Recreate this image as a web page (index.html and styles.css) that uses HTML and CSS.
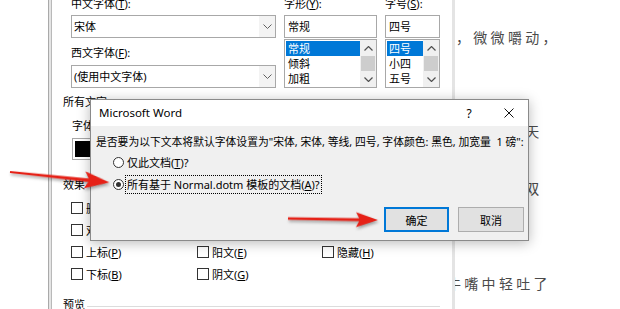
FILE: index.html
```html
<!DOCTYPE html>
<html lang="zh-CN">
<head>
<meta charset="utf-8">
<title>Microsoft Word</title>
<link rel="stylesheet" href="styles.css">
</head>
<body>
<div class="screen">
  <div class="gutter"></div>
  <div class="fd">
    <div class="fd-inner">
      <div class="fd-top">
        <div class="fcol c1">
          <div class="lbl">中文字体(<u>T</u>):</div>
          <div class="combo"><span class="combo-text">宋体</span><span class="combo-btn"><svg width="9" height="5" viewBox="0 0 9 5"><polyline points="0.5,0.5 4.5,4.5 8.5,0.5" fill="none" stroke="#606060" stroke-width="1"/></svg></span></div>
          <div class="lbl lbl-gap">西文字体(<u>F</u>):</div>
          <div class="combo"><span class="combo-text">(使用中文字体)</span><span class="combo-btn"><svg width="9" height="5" viewBox="0 0 9 5"><polyline points="0.5,0.5 4.5,4.5 8.5,0.5" fill="none" stroke="#606060" stroke-width="1"/></svg></span></div>
        </div>
        <div class="fcol c2">
          <div class="lbl">字形(<u>Y</u>):</div>
          <div class="field">常规</div>
          <div class="list">
            <div class="items">
              <div class="item sel">常规</div>
              <div class="item">倾斜</div>
              <div class="item">加粗</div>
            </div>
            <div class="sb">
              <span class="sb-arrow"><svg width="9" height="5" viewBox="0 0 9 5"><polyline points="0.5,4.5 4.5,0.5 8.5,4.5" fill="none" stroke="#505050" stroke-width="1.2"/></svg></span>
              <span class="sb-thumb"></span>
              <span class="sb-arrow"><svg width="9" height="5" viewBox="0 0 9 5"><polyline points="0.5,0.5 4.5,4.5 8.5,0.5" fill="none" stroke="#505050" stroke-width="1.2"/></svg></span>
            </div>
          </div>
        </div>
        <div class="fcol c3">
          <div class="lbl">字号(<u>S</u>):</div>
          <div class="field">四号</div>
          <div class="list">
            <div class="items">
              <div class="item sel">四号</div>
              <div class="item">小四</div>
              <div class="item">五号</div>
            </div>
            <div class="sb">
              <span class="sb-arrow"><svg width="9" height="5" viewBox="0 0 9 5"><polyline points="0.5,4.5 4.5,0.5 8.5,4.5" fill="none" stroke="#505050" stroke-width="1.2"/></svg></span>
              <span class="sb-thumb"></span>
              <span class="sb-arrow"><svg width="9" height="5" viewBox="0 0 9 5"><polyline points="0.5,0.5 4.5,4.5 8.5,0.5" fill="none" stroke="#505050" stroke-width="1.2"/></svg></span>
            </div>
          </div>
        </div>
      </div>

      <div class="group-head g-all">所有文字</div>
      <div class="color-block">
        <div class="lbl">字体颜色(<u>C</u>):</div>
        <div class="swatch"><span class="swatch-fill"></span></div>
      </div>

      <div class="group-head g-fx">效果</div>
      <div class="effects">
        <label class="chk"><span class="box"></span>删除线(<u>K</u>)</label>
        <label class="chk"><span class="box"></span>阴影(<u>W</u>)</label>
        <label class="chk"><span class="box"></span>小型大写字母(<u>M</u>)</label>
        <label class="chk"><span class="box"></span>双删除线(<u>L</u>)</label>
        <label class="chk"><span class="box"></span>空心(<u>O</u>)</label>
        <label class="chk"><span class="box"></span>全部大写字母(<u>A</u>)</label>
        <label class="chk"><span class="box"></span>上标(<u>P</u>)</label>
        <label class="chk"><span class="box"></span>阳文(<u>E</u>)</label>
        <label class="chk"><span class="box"></span>隐藏(<u>H</u>)</label>
        <label class="chk"><span class="box"></span>下标(<u>B</u>)</label>
        <label class="chk"><span class="box"></span>阴文(<u>G</u>)</label>
      </div>

      <div class="group-head g-pv">预览</div>
    </div>
  </div>

  <div class="doc">
    <p class="dl dl1">，微微嚼动，</p>
    <p class="dl dl2">抬头望着天</p>
    <p class="dl dl3">一只手和双</p>
    <p class="dl dl4">牛嘴中轻吐了</p>
  </div>

  <div class="msg">
    <div class="msg-title">
      <span class="msg-caption">Microsoft Word</span>
      <span class="tb-btn tb-help">?</span>
      <span class="tb-btn tb-close"><svg width="10" height="10" viewBox="0 0 10 10"><path d="M0.5 0.5 L9.5 9.5 M9.5 0.5 L0.5 9.5" stroke="#111" stroke-width="1" fill="none"/></svg></span>
    </div>
    <div class="msg-body">
      <div class="msg-text">是否要为以下文本将默认字体设置为"宋体, 宋体, 等线, 四号, 字体颜色: 黑色, 加宽量&nbsp; 1 磅":</div>
      <div class="radios">
        <div class="radio"><span class="circle"></span><span class="rtext">仅此文档(<u>T</u>)?</span></div>
        <div class="radio"><span class="circle on"></span><span class="rtext focus">所有基于 Normal.dotm 模板的文档(<u>A</u>)?</span></div>
      </div>
      <div class="btns">
        <span class="btn default">确定</span>
        <span class="btn">取消</span>
      </div>
    </div>
  </div>

  <svg class="arrows" width="620" height="309" viewBox="0 0 620 309">
    <g class="arrow" transform="translate(10,172) rotate(6)">
      <path d="M0 -1 L80 -1.8 L80 1.8 L0 1 Z" fill="#e62117"/>
      <path d="M75 -8.5 L100 0 L75 8.5 L80 0 Z" fill="#e62117"/>
    </g>
    <g class="arrow" transform="translate(288,218.5) rotate(1)">
      <path d="M0 -1.2 L72 -1.6 L72 1.6 L0 1.2 Z" fill="#e62117"/>
      <path d="M68 -7.5 L90 0 L68 7.5 L72 0 Z" fill="#e62117"/>
    </g>
  </svg>
</div>
</body>
</html>
```

FILE: styles.css
```css
* { box-sizing: border-box; }

html, body {
  margin: 0;
  padding: 0;
  background: #fff;
}

body {
  font-family: "Noto Sans", "Noto Sans CJK SC", sans-serif;
  font-size: 11px;
  color: #000;
}

u { text-decoration: underline; text-underline-offset: 1px; }

.screen {
  position: relative;
  width: 620px;
  height: 309px;
  overflow: hidden;
  display: flex;
  background: #fff;
}

.gutter {
  width: 48px;
  flex: none;
  background: #fff;
}

/* ---------- Font dialog (behind) ---------- */
.fd {
  position: relative;
  z-index: 1;
  width: 407px;
  flex: none;
  height: 309px;
  background: #fff;
  border-left: 3px solid #e4e4e4;
  border-right: 3px solid #e4e4e4;
  box-shadow: inset 1px 0 0 #b9b9b9;
  padding: 0 12px;
}
.fd::before {
  content: "";
  position: absolute;
  left: -3px;
  top: 0;
  bottom: 0;
  width: 1px;
  background: #a9a9a9;
}

.fd-inner {
  margin-top: -3px;
}

.lbl {
  height: 14px;
  line-height: 14px;
  white-space: nowrap;
}

.fd-top {
  display: grid;
  grid-template-columns: 205px 93px 55px;
  column-gap: 8px;
  margin-left: 8px;
}

.fcol .lbl { margin-bottom: 4px; }
.fcol .lbl-gap { margin-top: 8px; margin-bottom: 5px; }

.combo {
  height: 23px;
  border: 1px solid #a8a8a8;
  background: #fff;
  display: flex;
  align-items: stretch;
}
.combo-text {
  flex: 1;
  padding-left: 2px;
  line-height: 21px;
  white-space: nowrap;
}
.combo-btn {
  width: 16px;
  background: #f3f3f3;
  display: flex;
  align-items: center;
  justify-content: center;
}

.field {
  height: 23px;
  border: 1px solid #a8a8a8;
  padding-left: 3px;
  line-height: 21px;
}

.list {
  margin-top: 1px;
  height: 49px;
  border: 1px solid #a8a8a8;
  display: flex;
  padding: 1px 0 1px 1px;
}
.items { flex: 1; }
.item {
  height: 15px;
  line-height: 15px;
  padding-left: 2px;
  white-space: nowrap;
}
.item.sel {
  background: #0078d7;
  color: #fff;
}
.sb {
  width: 16px;
  margin-top: -1px;
  margin-bottom: -1px;
  background: #f0f0f0;
  display: flex;
  flex-direction: column;
}
.sb-arrow {
  height: 16px;
  display: flex;
  align-items: center;
  justify-content: center;
}
.sb-thumb {
  flex: 1;
  background: #cdcdcd;
  margin: 0 1px;
}

.group-head {
  display: flex;
  align-items: center;
  height: 14px;
  line-height: 14px;
  white-space: nowrap;
}
.group-head::after {
  content: "";
  flex: 1;
  height: 1px;
  background: #dcdcdc;
  margin-left: 2px;
  margin-top: 3px;
}
.g-all { margin-top: 7px; }
.g-fx { margin-top: 18px; }
.g-pv { margin-top: 13px; }

.color-block {
  margin-top: 10px;
  padding-left: 9px;
}
.color-block .lbl { margin-bottom: 5px; }
.swatch {
  width: 110px;
  height: 22px;
  border: 1px solid #a8a8a8;
  padding: 2px;
  background: #fff;
}
.swatch-fill {
  display: block;
  height: 100%;
  background: #000;
}

.effects {
  margin-top: 5px;
  margin-left: 8px;
  display: grid;
  grid-template-columns: 126px 125px 1fr;
  grid-auto-rows: 22px;
}
.chk {
  display: flex;
  align-items: center;
  white-space: nowrap;
}
.box {
  width: 12px;
  height: 12px;
  border: 1px solid #333;
  background: #fff;
  margin-right: 3px;
  flex: none;
}

/* ---------- Document behind ---------- */
.doc {
  flex: 1;
  padding-left: 1px;
  padding-top: 27px;
  font-family: "Noto Sans CJK SC", sans-serif;
  font-size: 14px;
  letter-spacing: 3.3px;
  color: #4a4a4a;
}
.dl {
  margin: 0;
  height: 20px;
  line-height: 20px;
  white-space: nowrap;
}
.dl2 { margin-top: 74px; }
.dl3 { margin-top: 37px; }
.dl4 { margin-top: 75px; text-indent: -9px; }

/* ---------- Message box ---------- */
.msg {
  position: absolute;
  z-index: 3;
  left: 90px;
  top: 99px;
  width: 439px;
  height: 142px;
  border: 1px solid #8a8a8a;
  background: #f0f0f0;
  box-shadow: 0 2px 12px rgba(0, 0, 0, 0.28);
  display: flex;
  flex-direction: column;
}
.msg-title {
  height: 26px;
  background: #fff;
  display: flex;
  align-items: center;
}
.msg-caption {
  flex: 1;
  padding-left: 8px;
  font-size: 11.5px;
  line-height: 26px;
}
.tb-btn {
  width: 40px;
  height: 26px;
  display: flex;
  align-items: center;
  justify-content: center;
}
.tb-help { font-size: 12px; }
.tb-close { width: 39px; }

.msg-body {
  flex: 1;
  padding: 9px 4px 8px 5px;
  display: flex;
  flex-direction: column;
}
.msg-text {
  height: 14px;
  line-height: 14px;
  font-size: 10.8px;
  white-space: nowrap;
}
.radios { margin-top: 2px; }
.radio {
  height: 22px;
  display: flex;
  align-items: center;
  padding-left: 17px;
}
.circle {
  width: 11px;
  height: 11px;
  border: 1px solid #333;
  border-radius: 50%;
  background: #fff;
  flex: none;
  position: relative;
  margin-right: 2px;
}
.circle.on::after {
  content: "";
  position: absolute;
  left: 2px;
  top: 2px;
  width: 5px;
  height: 5px;
  border-radius: 50%;
  background: #333;
}
.rtext {
  padding: 1px 1px;
  line-height: 15px;
  white-space: nowrap;
}
.rtext.focus { outline: 1px dotted #000; outline-offset: 0; }

.btns {
  margin-top: 12px;
  display: flex;
  justify-content: flex-end;
  gap: 9px;
}
.btn {
  width: 66px;
  height: 25px;
  border: 1px solid #adadad;
  background: #e1e1e1;
  display: flex;
  align-items: center;
  justify-content: center;
}
.btn.default {
  width: 65px;
  border: 2px solid #0078d7;
}

/* ---------- Red arrows ---------- */
.arrows {
  position: absolute;
  left: 0;
  top: 0;
  z-index: 5;
  pointer-events: none;
}
.arrow {
  filter: drop-shadow(1px 2px 1.5px rgba(0, 0, 0, 0.35));
}
```
